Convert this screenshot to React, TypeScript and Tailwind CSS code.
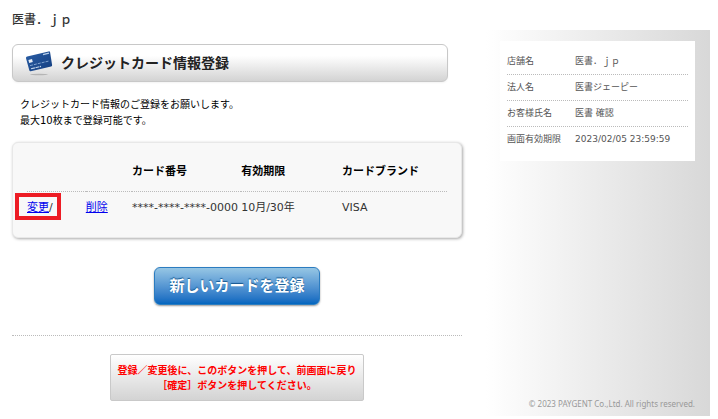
const CARDS = [{ numero: '****-****-****-0000', expiry: '10月/30年', brand: 'VISA' }]

const SHOP_INFO = [
  { label: '店舗名', value: '医書．ｊｐ' },
  { label: '法人名', value: '医書ジェーピー' },
  { label: 'お客様氏名', value: '医書 確認' },
  { label: '画面有効期限', value: '2023/02/05 23:59:59' },
]

function CardIcon() {
  return (
    <svg className="shrink-0" width="28" height="26" viewBox="0 0 28 26" aria-hidden="true">
      <defs>
        <linearGradient id="card" x1="0" y1="0" x2="1" y2="1">
          <stop offset="0" stopColor="#2a5ea6" />
          <stop offset="1" stopColor="#153f80" />
        </linearGradient>
      </defs>
      <ellipse cx="14" cy="24.500" rx="9" ry="0.8" fill="#b5b5b5" />
      <path d="M2.2 6.6 23.6 1.4q1.2-.3 1.5.9l2 12.6q.2 1.2-1 1.5L5.8 21.2q-1.2.3-1.5-.9L1 8.2q-.2-1.3 1.2-1.6z" fill="url(#card)" />
      <path d="M3.4 9.9l3.6-.9.8 3-3.600.9z" fill="#e6edf5" />
      <path d="M18 4.600l6-1.400" stroke="#b9d0ea" strokeWidth="1.2" />
      <path d="M5 15.600l19-4.600" stroke="#7fa3d0" strokeWidth="1" strokeDasharray="3 1" />
      <path d="M6 18.800l10-2.400" stroke="#c3d5ea" strokeWidth="1.1" strokeDasharray="4 .6" />
    </svg>
  )
}

export default function App() {
  return (
    <div className="flex bg-white pr-2 pl-3 font-['DejaVu_Sans','Noto_Sans_CJK_JP',sans-serif] text-[11px] text-black">
      <main className="min-w-0 flex-1 pt-3">
        <p className="text-xs leading-4 font-medium text-[#333]">医書．ｊｐ</p>

        <h1 className="mt-4 mr-3.5 flex h-[38px] items-center gap-2 rounded-md border border-[#c8c8c8] bg-linear-to-b from-white from-30% to-[#d3d3d3] pl-3 text-sm font-bold text-[#222] shadow-xs">
          <CardIcon />
          クレジットカード情報登録
        </h1>

        <p className="mt-[15px] pl-2 text-[10px] leading-4">
          クレジットカード情報のご登録をお願いします。
          <br />
          最大10枚まで登録可能です。
        </p>

        <section className="mt-[13px] rounded-md border border-[#e8e8e8] bg-[#f8f8f8] px-3.5 pt-2.5 pb-3 shadow-[1px_1px_3px_#aaa]">
          <table className="w-full table-fixed text-left">
            <colgroup>
              <col className="w-[14%]" />
              <col className="w-[11%]" />
              <col className="w-[26%]" />
              <col className="w-[24%]" />
              <col className="w-[25%]" />
            </colgroup>
            <thead>
              <tr className="h-[38px] border-b border-dotted border-[#bbb]">
                <td />
                <td />
                <th scope="col">カード番号</th>
                <th scope="col">有効期限</th>
                <th scope="col">カードブランド</th>
              </tr>
            </thead>
            <tbody>
              {CARDS.map((card) => (
                <tr key={card.numero} className="h-[34px] whitespace-nowrap text-[#333]">
                  <td>
                    <span className="relative">
                      <a href="#edit" className="text-[#00e] underline">変更</a>/
                      <span className="pointer-events-none absolute -top-2 -right-2 -bottom-1.5 -left-3 border-4 border-[#ed1c24]" />
                    </span>
                  </td>
                  <td>
                    <a href="#delete" className="text-[#00e] underline">削除</a>
                  </td>
                  <td>{card.numero}</td>
                  <td>{card.expiry}</td>
                  <td>{card.brand}</td>
                </tr>
              ))}
            </tbody>
          </table>
        </section>

        <div className="mt-[29px] flex justify-center">
          <button
            type="button"
            className="h-[38px] rounded-md border border-[#2b7cc0] bg-linear-to-b from-[#96c6e4] to-[#0066bf] px-3.5 text-[15px] font-bold text-white shadow-[0_1px_2px_#999] text-shadow-[0_-1px_1px_#15578f]"
          >
            新しいカードを登録
          </button>
        </div>

        <hr className="mt-[30px] border-dotted border-[#bbb]" />

        <div className="mt-[18px] flex justify-center">
          <button
            type="button"
            className="h-[47px] rounded-xs border border-[#c9c9c9] bg-linear-to-b from-white to-[#d3d3d3] px-[7px] text-[10px] leading-[15px] font-bold text-[#f00]"
          >
            登録／変更後に、このボタンを押して、前画面に戻り
            <br />
            ［確定］ボタンを押してください。
          </button>
        </div>
      </main>

      <aside className="mt-[30px] ml-6 flex h-[386px] w-56 shrink-0 flex-col justify-between bg-linear-to-r from-white to-[#d8d8d8] pt-[11px] pr-[15px] pb-1 pl-3.5 text-[9px] text-[#555]">
        <dl className="divide-y divide-dotted divide-[#bbb] bg-white px-[7px] py-2">
          {SHOP_INFO.map((row) => (
            <div key={row.label} className="flex h-[26px] items-center">
              <dt className="w-[68px] shrink-0">{row.label}</dt>
              <dd>{row.value}</dd>
            </div>
          ))}
        </dl>
        <footer className="text-right font-['Noto_Sans',sans-serif] text-[8px] leading-4 whitespace-nowrap text-[#999]">
          © 2023 PAYGENT Co.,Ltd. All rights reserved.
        </footer>
      </aside>
    </div>
  )
}
